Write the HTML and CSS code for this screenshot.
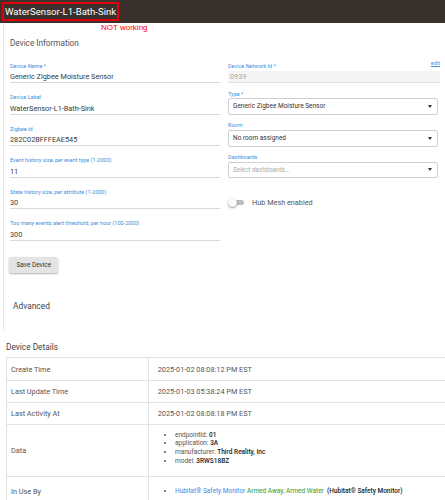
FILE: index.html
```html
<!DOCTYPE html>
<html lang="en">
<head>
  <meta charset="utf-8">
  <meta name="viewport" content="width=device-width, initial-scale=1.0">
  <title>WaterSensor-L1-Bath-Sink</title>
  <link rel="stylesheet" href="styles.css">
</head>
<body>
  <header class="topbar">
    <h1 class="title">WaterSensor-L1-Bath-Sink</h1>
  </header>
  <span class="note">NOT working</span>

  <main class="card">
    <h2 class="card-title">Device Information</h2>

    <div class="form-grid">
      <div class="col">
        <div class="field">
          <label class="field-label">Device Name *</label>
          <div class="field-value">Generic Zigbee Moisture Sensor</div>
        </div>
        <div class="field">
          <label class="field-label">Device Label</label>
          <div class="field-value">WaterSensor-L1-Bath-Sink</div>
        </div>
        <div class="field">
          <label class="field-label">Zigbee Id</label>
          <div class="field-value">282C02BFFFEAE545</div>
        </div>
        <div class="field">
          <label class="field-label">Event history size, per event type (1-2000)</label>
          <div class="field-value">11</div>
        </div>
        <div class="field">
          <label class="field-label">State history size, per attribute (1-2000)</label>
          <div class="field-value">30</div>
        </div>
        <div class="field">
          <label class="field-label">Too many events alert threshold, per hour (100-2000)</label>
          <div class="field-value">300</div>
        </div>
      </div>

      <div class="col col-right">
        <div class="label-row">
          <label class="field-label">Device Network Id *</label>
          <a class="edit">edit</a>
        </div>
        <div class="net-value">0939</div>

        <div class="select-field">
          <label class="field-label">Type *</label>
          <div class="select"><span>Generic Zigbee Moisture Sensor</span><i class="caret"></i></div>
        </div>
        <div class="select-field">
          <label class="field-label">Room</label>
          <div class="select"><span>No room assigned</span><i class="caret"></i></div>
        </div>
        <div class="select-field">
          <label class="field-label">Dashboards</label>
          <div class="select"><span class="placeholder">Select dashboards...</span><i class="caret"></i></div>
        </div>

        <div class="toggle-row">
          <div class="switch"><span class="knob"></span></div>
          <span class="toggle-text">Hub Mesh enabled</span>
        </div>
      </div>
    </div>

    <button class="btn" type="button">Save Device</button>

    <div class="advanced">Advanced</div>
  </main>

  <section class="details">
    <h2 class="details-title">Device Details</h2>
    <table class="details-table">
      <tr class="r1">
        <td class="key">Create Time</td>
        <td>2025-01-02 08:08:12 PM EST</td>
      </tr>
      <tr class="r2">
        <td class="key">Last Update Time</td>
        <td>2025-01-03 05:38:24 PM EST</td>
      </tr>
      <tr class="r3">
        <td class="key">Last Activity At</td>
        <td>2025-01-02 08:08:18 PM EST</td>
      </tr>
      <tr class="r4">
        <td class="key">Data</td>
        <td>
          <ul class="data-list">
            <li>endpointId: <b>01</b></li>
            <li>application: <b>3A</b></li>
            <li>manufacturer: <b>Third Reality, Inc</b></li>
            <li>model: <b>3RWS18BZ</b></li>
          </ul>
        </td>
      </tr>
      <tr class="r5">
        <td class="key">In Use By</td>
        <td>
          <ul class="data-list use-list">
            <li><a class="link">Hubitat® Safety Monitor</a> <span class="green">Armed Away, Armed Water</span> &nbsp;<b>(Hubitat® Safety Monitor)</b></li>
          </ul>
        </td>
      </tr>
    </table>
  </section>
</body>
</html>
```

FILE: styles.css
```css
* {
  box-sizing: border-box;
}

html,
body {
  overflow: hidden;
}

body {
  margin: 0;
  background: #fff;
  font-family: Roboto, "Noto Sans", sans-serif;
  color: #444;
}

/* top bar */
.topbar {
  height: 23px;
  background: #3a302c;
  display: flex;
  align-items: center;
  padding-left: 2px;
}

.title {
  margin: 0;
  height: 19px;
  padding: 0 1px;
  border: 2px solid #e3000b;
  font-size: 9.6px;
  line-height: 15px;
  font-weight: 400;
  color: #fff;
}

.note {
  position: absolute;
  left: 101px;
  top: 23px;
  font-family: "Liberation Sans", Arial, sans-serif;
  font-size: 8px;
  line-height: 10px;
  color: #f00;
}

/* device information card */
.card {
  margin-left: 3px;
  padding: 15px 7px 18.5px 6px;
  border-left: 1px solid #e6e6e6;
}

.card-title {
  margin: 0;
  font-size: 8.2px;
  line-height: 10px;
  font-weight: 400;
  color: #555;
}

.form-grid {
  display: grid;
  grid-template-columns: 210px 210px;
  column-gap: 8px;
  margin-top: 14.5px;
}

.field {
  margin-bottom: 11px;
}

.field-label {
  display: block;
  font-size: 5.5px;
  line-height: 7px;
  color: #3d8fdc;
  white-space: nowrap;
}

.field-value {
  padding: 2.5px 0 1px;
  font-size: 7.3px;
  line-height: 9px;
  color: #3a3a3a;
  border-bottom: 1px solid #d9d9d9;
}

.col-right {
  padding-top: 0.7px;
}

.label-row {
  display: flex;
  justify-content: space-between;
  align-items: flex-start;
  margin-right: -2px;
}

.edit {
  margin-top: -3.5px;
  font-size: 5.5px;
  line-height: 7px;
  color: #3d8fdc;
  text-decoration: underline;
}

.net-value {
  height: 12px;
  margin: 0.8px -2px 0 0;
  padding-left: 2px;
  background: #f4f4f4;
  border-bottom: 1px solid #e4e4e4;
  font-size: 7.3px;
  line-height: 11px;
  color: #aaa;
}

.select-field {
  margin-top: 7.6px;
}

.select {
  height: 16.7px;
  margin-top: 0.5px;
  padding: 0 5px 0 4px;
  display: flex;
  align-items: center;
  justify-content: space-between;
  border: 1px solid #cfcfcf;
  border-radius: 2px;
  font-size: 6.5px;
  color: #333;
}

.placeholder {
  font-style: italic;
  color: #aaa;
}

.caret {
  width: 0;
  height: 0;
  border-left: 2.5px solid transparent;
  border-right: 2.5px solid transparent;
  border-top: 3px solid #333;
}

.toggle-row {
  display: flex;
  align-items: center;
  gap: 8px;
  height: 10px;
  margin-top: 19.4px;
  font-size: 7.3px;
}

.toggle-text {
  color: #555;
}

.switch {
  width: 16px;
  height: 5px;
  display: flex;
  align-items: center;
  border-radius: 3px;
  background: #bdbdbd;
}

.knob {
  width: 9px;
  height: 9px;
  flex-shrink: 0;
  border-radius: 50%;
  background: #fafafa;
  box-shadow: 0 1px 2px rgba(0, 0, 0, 0.4);
}

.btn {
  display: block;
  width: 49px;
  height: 16px;
  margin: 5.5px 0 0 -0.7px;
  padding: 0;
  border: none;
  border-radius: 2px;
  background: #e4e4e4;
  box-shadow: 0 1px 2px rgba(0, 0, 0, 0.3);
  font-family: Roboto, sans-serif;
  font-size: 6.5px;
  color: #333;
}

.advanced {
  margin-top: 27.5px;
  padding-left: 3px;
  font-size: 8.4px;
  line-height: 11px;
  color: #444;
}

/* device details */
.details {
  padding-left: 6px;
  margin-top: 12px;
}

.details-title {
  margin: 0 0 5.3px;
  font-size: 8.3px;
  line-height: 10px;
  font-weight: 400;
  color: #444;
}

.details-table {
  width: 460px;
  margin-left: -0.3px;
  border-collapse: collapse;
  font-size: 7.3px;
  color: #555;
}

.details-table td {
  padding: 0 0 0 9px;
  border: 1px solid #e2e2e2;
  vertical-align: middle;
  color: #555;
}

.details-table td.key {
  width: 142px;
  padding-left: 4.3px;
  color: #555;
}

.r1 { height: 23px; }
.r2 { height: 22px; }
.r3 { height: 21.5px; }
.r4 { height: 52.7px; }
.r5 { height: 30px; }

.data-list {
  margin: 0 0 5px;
  padding-left: 17.3px;
  font-size: 6.5px;
  line-height: 8.7px;
  color: #555;
}

.data-list b {
  color: #222;
  font-weight: 500;
}

.use-list {
  margin: 0 0 2px;
}

.link {
  color: #3a8ee6;
}

.green {
  color: #2e9a2e;
}
```
